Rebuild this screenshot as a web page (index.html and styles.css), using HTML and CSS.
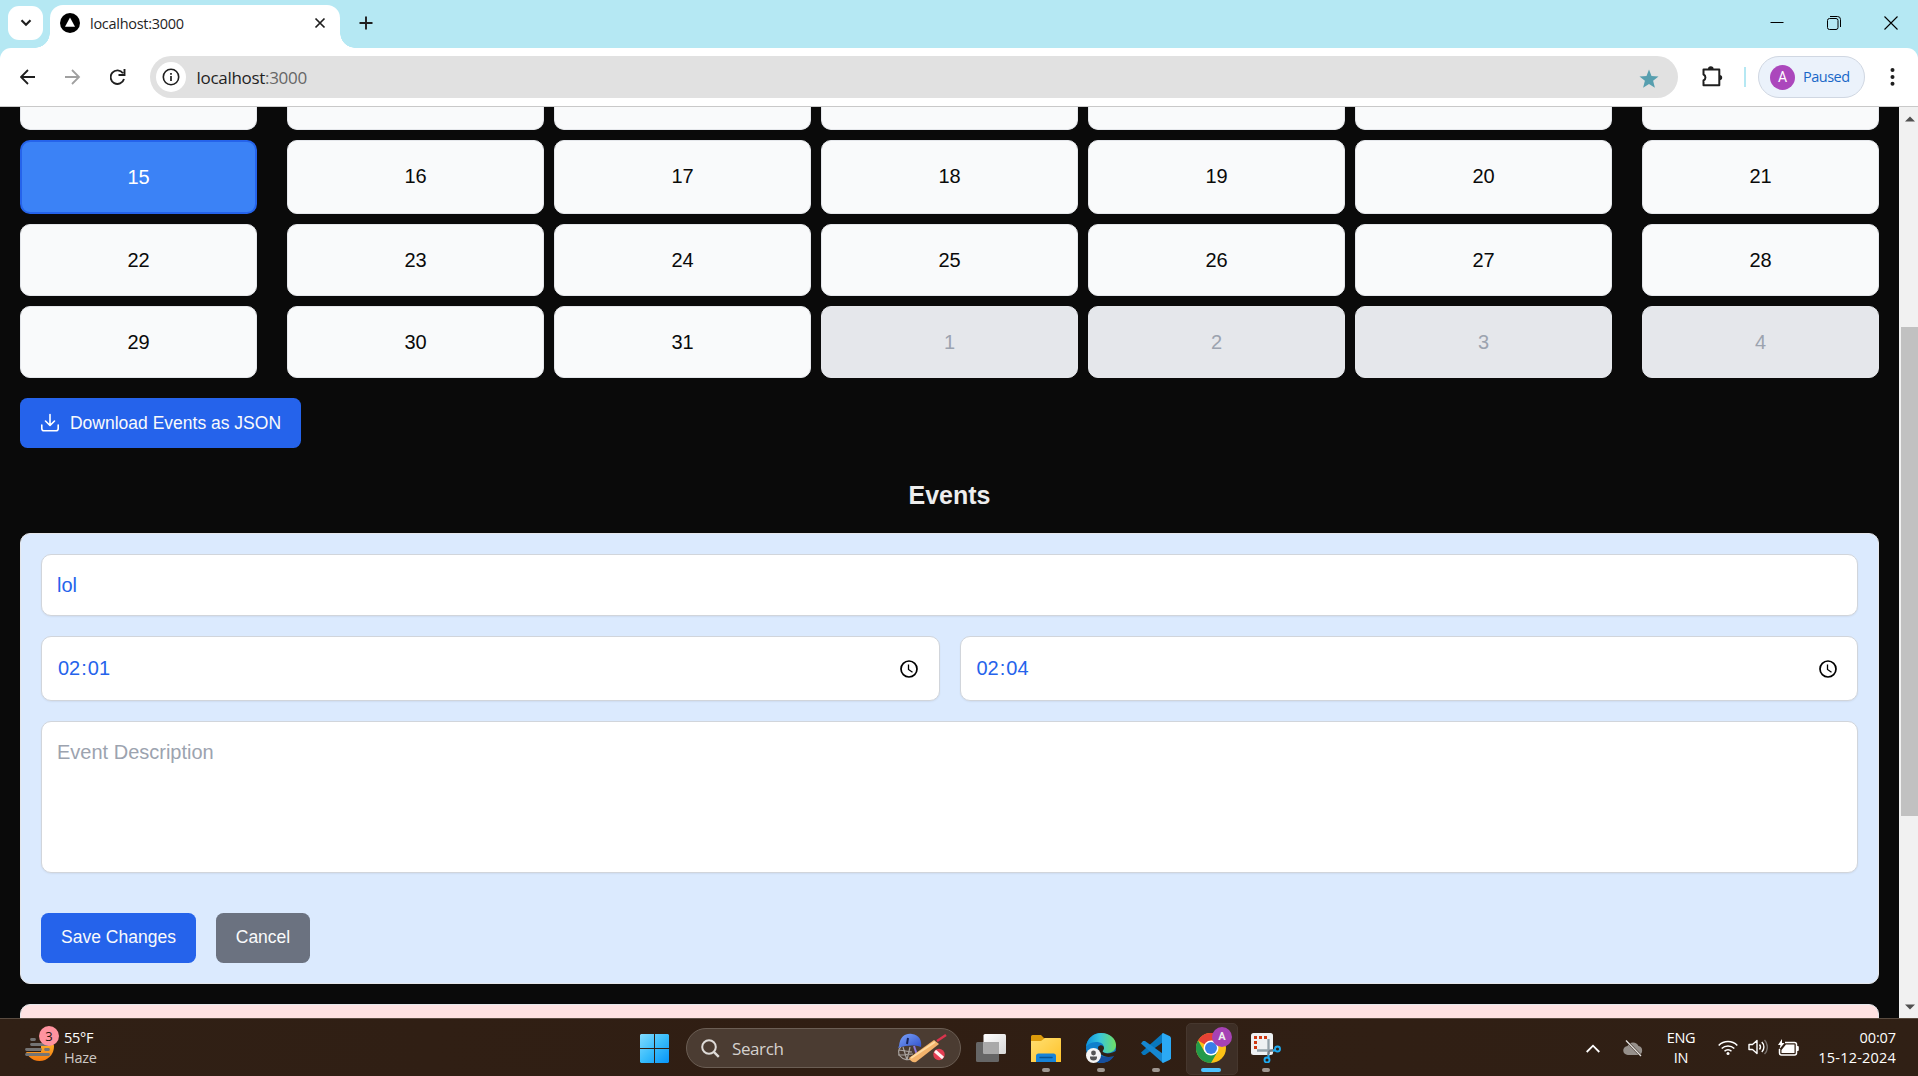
FILE: index.html
```html
<!DOCTYPE html>
<html lang="en">
<head>
<meta charset="utf-8">
<title>localhost:3000</title>
<link rel="stylesheet" href="styles.css">
</head>
<body>
<div class="screen">
  <header class="tabstrip">
    <button class="tab-search" aria-label="Search tabs"><svg width="12" height="8" viewBox="0 0 12 8"><path d="M1.500 1.300 6 5.800l4.500-4.500" fill="none" stroke="#1f1f1f" stroke-width="2.200"/></svg></button>
    <div class="tab">
      <svg class="favicon" width="20" height="20" viewBox="0 0 20 20"><circle cx="10" cy="10" r="10"/><path d="M10 4.600 15 13.700H5z" fill="#fff"/></svg>
      <span class="tab-title">localhost:3000</span>
      <svg class="tab-close" width="12" height="12" viewBox="0 0 12 12"><path d="M1.500 1.500l9 9M10.500 1.500l-9 9" stroke="#1f1f1f" stroke-width="1.700"/></svg>
    </div>
    <svg class="new-tab" width="14" height="14" viewBox="0 0 14 14"><path d="M7 .5v13M.5 7h13" stroke="#1f1f1f" stroke-width="1.900"/></svg>
    <div class="window-controls">
      <svg width="14" height="14" viewBox="0 0 14 14"><path d="M.5 6.500h13" stroke="#000" stroke-width="1"/></svg>
      <svg width="14" height="14" viewBox="0 0 14 14" fill="none" stroke="#000"><rect x=".5" y="2.500" width="10.500" height="11" rx="2"/><path d="M3 .5h7.500a3 3 0 0 1 3 3V11"/></svg>
      <svg width="14" height="14" viewBox="0 0 14 14"><path d="M.5.5l13 13M13.500.5l-13 13" stroke="#000" stroke-width="1.100"/></svg>
    </div>
  </header>

  <nav class="toolbar">
    <svg class="nav-icon" width="16" height="16" viewBox="0 0 16 16" fill="none" stroke="#1f1f1f" stroke-width="1.800"><path d="M15 8H1.500M8 1 1 8l7 7"/></svg>
    <svg class="nav-icon" width="16" height="16" viewBox="0 0 16 16" fill="none" stroke="#a0a0a0" stroke-width="1.800"><path d="M0 8h13.500M7 1l7 7-7 7"/></svg>
    <svg class="nav-icon" width="16" height="16" viewBox="0 0 16 16" fill="none" stroke="#1f1f1f" stroke-width="1.900"><path d="M13 4.200A6.800 6.800 0 1 0 14 10M14.500 0v6h-6"/></svg>
    <div class="address">
      <span class="site-info"><svg width="18" height="18" viewBox="0 0 18 18"><circle cx="9" cy="9" r="7.700" fill="none" stroke="#1f1f1f" stroke-width="1.600"/><path d="M9 8v5M9 5v1.700" stroke="#1f1f1f" stroke-width="1.700"/></svg></span>
      <span class="url">localhost<span class="port">:3000</span></span>
      <svg class="star" width="20" height="20" viewBox="0 0 20 20"><path d="M10 .5l2.500 6.500 7 .4-5.400 4.400 1.800 6.900L10 14.900l-5.900 3.800 1.800-6.900L.5 7.400l7-.4z" fill="#579faf"/></svg>
    </div>
    <svg class="extensions" width="22" height="22" viewBox="0 0 22 22"><path d="M2.500 3.500h15.800v15.800H2.500v-4.800a3.300 3.300 0 0 0 0-6z" fill="none" stroke="#1f1f1f" stroke-width="2" stroke-linejoin="round"/><path d="M7 3a2.800 2.800 0 0 1 5.600 0zM18.500 8.900a2.700 2.700 0 0 1 0 5.400z" fill="#1f1f1f"/></svg>
    <span class="divider"></span>
    <div class="profile"><span class="avatar">A</span><span class="paused">Paused</span></div>
    <svg class="menu-dots" width="5" height="18" viewBox="0 0 5 18" fill="#1f1f1f"><circle cx="2.500" cy="2" r="2"/><circle cx="2.500" cy="9" r="2"/><circle cx="2.500" cy="15.800" r="2"/></svg>
  </nav>

  <div class="viewport">
    <main class="page">
      <div class="calendar">
        <div class="day clipped first"></div><div class="day clipped"></div><div class="day clipped"></div><div class="day clipped"></div><div class="day clipped"></div><div class="day clipped"></div><div class="day clipped last"></div>
        <div class="day first selected">15</div><div class="day current-week">16</div><div class="day current-week">17</div><div class="day current-week">18</div><div class="day current-week">19</div><div class="day current-week">20</div><div class="day current-week last">21</div>
        <div class="day first">22</div><div class="day">23</div><div class="day">24</div><div class="day">25</div><div class="day">26</div><div class="day">27</div><div class="day last">28</div>
        <div class="day first">29</div><div class="day">30</div><div class="day">31</div><div class="day other">1</div><div class="day other">2</div><div class="day other">3</div><div class="day other last">4</div>
      </div>
      <button class="btn download"><svg width="20" height="20" viewBox="0 0 20 20" fill="none" stroke="#fff" stroke-width="1.600" stroke-linecap="round" stroke-linejoin="round"><path d="M1.800 12v3.500a2.300 2.300 0 0 0 2.300 2.300h11.800a2.300 2.300 0 0 0 2.300-2.300V12M5.500 8l4.500 4.500L14.500 8M10 12V1.500"/></svg><span>Download Events as JSON</span></button>
      <h2 class="heading">Events</h2>
      <section class="event-card">
        <div class="field title">lol</div>
        <div class="times">
          <div class="field time"><span class="clock-value"><span>02</span><span>:</span><span>01</span></span><svg width="18" height="18" viewBox="0 0 18 18" fill="none" stroke="#000"><circle cx="9" cy="9" r="8" stroke-width="1.700"/><path d="M8.500 4.500V9.500l4 2.700" stroke-width="1.300"/></svg></div>
          <div class="field time"><span class="clock-value"><span>02</span><span>:</span><span>04</span></span><svg width="18" height="18" viewBox="0 0 18 18" fill="none" stroke="#000"><circle cx="9" cy="9" r="8" stroke-width="1.700"/><path d="M8.500 4.500V9.500l4 2.700" stroke-width="1.300"/></svg></div>
        </div>
        <div class="field description">Event Description</div>
        <div class="actions"><button class="btn save">Save Changes</button><button class="btn cancel">Cancel</button></div>
      </section>
      <section class="next-card"></section>
    </main>
    <div class="scrollbar">
      <svg width="10" height="6" viewBox="0 0 10 6"><path d="M0 5.500 5 .5l5 5z" fill="#505050"/></svg>
      <div class="thumb"></div>
      <svg class="down" width="10" height="6" viewBox="0 0 10 6"><path d="M0 .5l5 5 5-5z" fill="#505050"/></svg>
    </div>
  </div>

  <footer class="taskbar">
    <div class="weather">
      <div class="weather-icon">
        <svg width="30" height="28" viewBox="0 0 30 28"><defs><linearGradient id="sun" x2="0" y2="1"><stop stop-color="#ffd13b"/><stop offset="1" stop-color="#f57a10"/></linearGradient></defs><circle cx="14.500" cy="12.500" r="14.500" fill="url(#sun)"/><path d="M0 0h30v11H0z" fill="#302015"/><path d="M0 10h16v8H0z" fill="#302015"/><g stroke="#747474" stroke-width="2.800" stroke-linecap="round"><path d="M6.500 5.500h3M6.500 10.500h18M1.500 15.500h14M20.500 15.500h3M1.500 20.500h22"/></g></svg>
        <span class="alert">3</span>
      </div>
      <div class="weather-text"><span>55°F</span><span class="haze">Haze</span></div>
    </div>
    <svg class="start" width="29" height="29" viewBox="0 0 29 29"><defs><linearGradient id="win" gradientUnits="userSpaceOnUse" x1="0" y1="0" x2="29" y2="29"><stop stop-color="#82dbff"/><stop offset=".5" stop-color="#39bdfb"/><stop offset="1" stop-color="#0794f8"/></linearGradient></defs><path d="M1 0h13v14H0V1zM15 0h13l1 1v13H15zM0 15h14v14H1l-1-1zM15 15h14v13l-1 1H15z" fill="url(#win)"/></svg>
    <div class="search">
      <svg width="19" height="19" viewBox="0 0 19 19" fill="none" stroke="#dedbd8"><circle cx="8" cy="8" r="6.800" stroke-width="2"/><path d="M12.800 12.800l5 5" stroke-width="2.400"/></svg>
      <span class="search-text">Search</span>
      <svg class="cricket" width="50" height="30" viewBox="0 0 50 30"><defs><linearGradient id="helmet" x2="1" y2="1"><stop stop-color="#7ba3fa"/><stop offset="1" stop-color="#3050ca"/></linearGradient></defs><path d="M4 14c-3 2-3 6-1 9 3 4 9 5 13 2M2 17l13 2M1 22l15-1M6 14l4 13M13 14l-3 13" fill="none" stroke="#aaa4a0" stroke-width="1.200"/><path d="M2 13C3 3 9 0 15 1c7 1 10 6 9 13-7-2-13-2-23 1z" fill="url(#helmet)"/><path d="M11 5l-1 6" stroke="#152257" stroke-width="2"/><path d="M17 13l3 9" stroke="#8e78da" stroke-width="2"/><path d="M12 25 37 7l5 4-23 18c-3 1-6-1-7-4z" fill="#f3b36c"/><path d="M14 25 38 9" stroke="#ffdaa0" stroke-width="2"/><path d="M40 8l9-6" stroke="#d9344d" stroke-width="2.500"/><circle cx="42" cy="21.500" r="5.700" fill="#e53c52"/><path d="M38 18l8 7" stroke="#fff1f2" stroke-width="3"/></svg>
    </div>
    <div class="apps">
      <div class="app idle"><svg viewBox="0 0 30 30"><defs><linearGradient id="pane" x2="1" y2="1"><stop stop-color="#fff"/><stop offset="1" stop-color="#d7d7d7"/></linearGradient></defs><rect x="0" y="9" width="23" height="20" rx="1.500" fill="#666"/><rect x="7.500" y="1" width="22.500" height="20" rx="1.500" fill="url(#pane)"/><path d="M7.500 9H23v12H7.500z" fill="#a9a9a9"/></svg></div>
      <div class="app"><svg viewBox="0 0 30 30"><defs><linearGradient id="folder" x2="1" y2="1"><stop stop-color="#ffdf71"/><stop offset="1" stop-color="#ffc229"/></linearGradient></defs><path d="M0 3.500A1.500 1.500 0 0 1 1.500 2H10l3 3h15a2 2 0 0 1 2 2v5H0z" fill="#dc9b0b"/><path d="M0 8h10l4-3h15a1 1 0 0 1 1 1v23H0z" fill="url(#folder)"/><path d="M5 29v-6a2.500 2.500 0 0 1 2.500-2.500h15A2.500 2.500 0 0 1 25 23v6z" fill="#1683d8"/><path d="M9 24.500h12" stroke="#075391" stroke-width="1.500" stroke-linecap="round"/></svg><i></i></div>
      <div class="app"><svg viewBox="0 0 30 30"><defs><linearGradient id="edge-top" x2="1"><stop stop-color="#0d91dc"/><stop offset=".45" stop-color="#37c5dd"/><stop offset="1" stop-color="#70df63"/></linearGradient></defs><circle cx="15" cy="15" r="15" fill="#0f80cc"/><path d="M0 14C1 5 8 0 15 0c9 0 15 6 15 12 0 5-4 8-9 8-3 0-5-1-5-2l2-3c0-4-3-6-8-6-5 0-9 3-10 5z" fill="url(#edge-top)"/><path d="M11 15c-1 6 5 11 17 8-3 5-8 7-13 7-5 0-9-9-4-15z" fill="#164f9e"/><path d="M12 14c2-3 6-2 6 1 0 2-2 3-1 4 2 2 8 2 13-1v4c-7 4-18 2-18-8z" fill="#302015"/><circle cx="7.500" cy="22.500" r="7.500" fill="#f5f5f5"/><circle cx="7.500" cy="20" r="2.400" fill="#555"/><path d="M4 23.500h7v1a3.500 3 0 0 1-7 0z" fill="#555"/></svg><i></i></div>
      <div class="app"><svg viewBox="0 0 30 30"><path d="M22 0 0 19.500l2 2.500 2 0L25 7z" fill="#0877bd"/><path d="M22 30 0 10.500 2 8h2l21 15z" fill="#1687d1"/><path d="M22 0l7 3.200 1 1.500v20.600l-1 1.500L22 30l-1-1V1z" fill="#2ba9f4"/></svg><i></i></div>
      <div class="app active"><svg viewBox="0 0 30 30"><circle cx="15" cy="15" r="15" fill="#fbc116"/><path d="M15 15 2 7.500A15 15 0 0 1 28 7.500H15z" fill="#e74235"/><path d="M2 7.500A15 15 0 0 0 15 30l6.500-11.200L15 15l-6.500 3.700z" fill="#229a4a"/><circle cx="15" cy="15" r="7.500" fill="#fff"/><circle cx="15" cy="15" r="6" fill="#397fe9"/></svg><span class="mini-avatar">A</span><i></i></div>
      <div class="app"><svg viewBox="0 0 30 30"><rect width="22" height="22" rx="2.500" fill="#eef1f3"/><path d="M4.500 16V4.500H17" fill="none" stroke="#cf3913" stroke-width="3" stroke-dasharray="3 2"/><path d="M17.500 6v15M6 17.500h16" stroke="#94a2aa" stroke-width="2.300"/><path d="M18 18l5-1M18 18l-1 5" stroke="#737f88" stroke-width="2"/><g fill="none" stroke="#1daaf0" stroke-width="1.900"><circle cx="26.500" cy="16" r="2.500"/><circle cx="16" cy="27" r="2.500"/><path d="M22 18l2.500-1M18 22l-1 3"/></g></svg><i></i></div>
    </div>
    <div class="tray">
      <svg class="chevron" width="14" height="9" viewBox="0 0 14 9"><path d="M.7 8 7 1.700 13.300 8" fill="none" stroke="#fff" stroke-width="1.800"/></svg>
      <svg class="cloud" width="20" height="17" viewBox="0 0 20 17"><path d="M5 15a4.500 4.500 0 0 1-.5-9A6 6 0 0 1 15.500 6a4.600 4.600 0 0 1 0 9z" fill="#96908b"/><path d="M3 .5l15 15.500" stroke="#302015" stroke-width="2.400"/><path d="M3 .5l15 15.500" stroke="#e5e3e1" stroke-width="1.300"/></svg>
      <div class="language"><span>ENG</span><span>IN</span></div>
      <svg class="wifi" width="20" height="16" viewBox="0 0 20 16" fill="none" stroke="#fff" stroke-width="1.500"><path d="M.7 5.500a13 13 0 0 1 18.600 0M3.700 8.500a9 9 0 0 1 12.600 0M6.500 11.300a5 5 0 0 1 7 0"/><circle cx="10" cy="13.500" r="1.500" fill="#fff" stroke="none"/></svg>
      <svg class="speaker" width="20" height="16" viewBox="0 0 20 16" fill="none" stroke="#fff" stroke-width="1.400"><path d="M1 5.500h3.500L9 1.500v13l-4.500-4H1z" stroke-linejoin="round"/><path d="M11.500 5.500a4 4 0 0 1 0 5M13.800 3a7 7 0 0 1 0 10"/><path d="M16.500 1a10 10 0 0 1 0 14" stroke="#77706b"/></svg>
      <svg class="battery" width="21" height="17" viewBox="0 0 21 17"><path d="M7 3.500h9.500a2 2 0 0 1 2 2V14a2 2 0 0 1-2 2H3.500a2 2 0 0 1-2-2v-4" fill="none" stroke="#fff" stroke-width="1.500"/><path d="M8 5.500h8.500V14h-13v-3zM19 7h.8a1 1 0 0 1 1 1v3a1 1 0 0 1-1 1H19zM4 0 0 6h2.500L1.500 10 6.500 4H4z" fill="#fff"/></svg>
      <div class="clock"><span class="hour">00:07</span><span>15-12-2024</span></div>
    </div>
  </footer>
</div>
</body>
</html>
```
FILE: styles.css
```css
* { box-sizing: border-box; }
body { margin: 0; overflow: hidden; font-family: "Open Sans", "Noto Sans", sans-serif; color: #1f1f1f; }
svg { display: block; flex: none; }
button { border: 0; padding: 0; font: inherit; }
.screen { width: 1918px; height: 1076px; display: flex; flex-direction: column; background: #b5e8f3; }

/* Browser tab strip */
.tabstrip { height: 48px; display: flex; padding-left: 8px; background: #b5e8f3; flex: none; }
.tab-search { width: 35px; height: 34px; margin-top: 6px; border-radius: 11px; background: #fff; display: flex; align-items: center; justify-content: center; }
.tab { position: relative; width: 290px; height: 43px; margin: 5px 0 0 7px; padding: 0 14px 7px 10px; display: flex; align-items: center; background: #fff; border-radius: 13px 13px 0 0; }
.tab::before, .tab::after { content: ""; position: absolute; bottom: 0; width: 15px; height: 15px; }
.tab::before { left: -15px; background: radial-gradient(circle at 0 0, transparent 14.500px, #fff 15px); }
.tab::after { right: -15px; background: radial-gradient(circle at 100% 0, transparent 14.500px, #fff 15px); }
.tab-title { margin-left: 10px; font-size: 14.500px; letter-spacing: -.28px; white-space: nowrap; }
.tab-close { margin-left: auto; }
.new-tab { margin: 16px 0 0 19px; }
.window-controls { display: flex; gap: 43px; margin: 16px 20px 0 auto; }

/* Browser toolbar */
.toolbar { height: 59px; padding-left: 20px; display: flex; align-items: center; flex: none; background: #fff; border-bottom: 1px solid #c9c9c9; border-radius: 11px 11px 0 0; }
.toolbar > * { flex: none; }
.nav-icon { margin-right: 29px; }
.nav-icon:nth-child(3) { margin-right: 24px; }
.address { width: 1528px; height: 42px; display: flex; align-items: center; padding: 0 19px 0 6px; border-radius: 21px; background: #e1e1e1; }
.site-info { width: 30px; height: 30px; border-radius: 50%; background: #fff; display: flex; align-items: center; justify-content: center; }
.url { margin-left: 10.500px; font-size: 17px; letter-spacing: -.3px; }
.port { color: #666; }
.star { margin: 3px 0 0 auto; }
.extensions { margin-left: 23px; }
.divider { width: 2px; height: 20px; margin-left: 21px; background: #b5e8f3; }
.profile { width: 107px; height: 42px; margin-left: 12px; padding-left: 11px; display: flex; align-items: center; border: 1px solid #d0d7e2; border-radius: 21px; background: #ebf2fb; }
.avatar { width: 25px; height: 25px; border-radius: 50%; background: #ab47bc; color: #fff; font: 14px/25px Roboto, sans-serif; text-align: center; }
.paused { margin-left: 8px; padding-bottom: 1px; color: #1967c8; font-size: 14.500px; letter-spacing: -.5px; }
.menu-dots { margin-left: 25px; }

/* Calendar page */
.viewport { height: 911px; display: flex; flex: none; overflow: hidden; background: #0a0a0a; }
.page { width: 1899px; padding: 0 20px; font-family: "Liberation Sans", Arial, sans-serif; }
.calendar { display: grid; grid-template-columns: repeat(7, 1fr); grid-template-rows: 23px 74px 72px 72px; gap: 10px; }
.day { display: flex; align-items: center; justify-content: center; border: 1px solid #e5e7eb; border-radius: 10px; background: #f9fafb; color: #0a0a0a; font-size: 20px; }
.clipped { border-top: 0; border-radius: 0 0 10px 10px; }
.current-week { padding-bottom: 2px; }
.first { margin-right: 20px; }
.last { margin-left: 20px; }
.selected { border: 2px solid #2563eb; background: #3b82f6; color: #fff; }
.other { background: #e5e7eb; color: #9ca3af; }
.btn { height: 50px; display: flex; align-items: center; justify-content: center; border-radius: 7.500px; background: #2563eb; color: #f9fafb; font-size: 17.500px; white-space: nowrap; }
.download { width: 281px; margin-top: 20px; gap: 10px; }
.heading { margin: 32px 0 0; height: 53px; font-size: 25px; line-height: 31px; color: #ededed; text-align: center; }
.event-card { height: 451px; padding: 20px; border: 1px solid #e5e7eb; border-radius: 10px; background: #dbeafe; }
.field { display: flex; border: 1px solid #d1d5db; border-radius: 10px; padding: 0 15px; background: #fff; box-shadow: 0 1px 2px rgba(0, 0, 0, .06); color: #2563eb; font-size: 20px; align-items: center; }
.title { height: 62px; }
.times { display: grid; grid-template-columns: 1fr 1fr; gap: 20px; margin: 20px 0; }
.time { height: 65px; justify-content: space-between; padding: 0 20.500px 0 16px; }
.clock-value { display: flex; gap: 1px; }
.description { height: 152px; align-items: flex-start; padding-top: 19px; color: #9ca3af; }
.actions { display: flex; gap: 20px; margin-top: 40px; }
.save { width: 155px; padding-bottom: 2px; }
.cancel { width: 94px; padding-bottom: 2px; background: #6b7280; }
.next-card { height: 40px; margin-top: 20px; border: 1px solid #e5e7eb; border-radius: 10px 10px 0 0; background: #fee2e2; }
.scrollbar { width: 19px; display: flex; flex-direction: column; align-items: center; padding: 9px 0 8px 2px; background: #f1f1f1; }
.thumb { width: 17px; height: 489px; margin-top: 205px; background: #c1c1c1; }
.down { margin-top: auto; }

/* Windows taskbar */
.taskbar { height: 58px; display: flex; border-top: 1px solid #594b40; background: linear-gradient(90deg, #302015, #301e13 45%, #302015); color: #fff; flex: none; font-size: 14.500px; line-height: 20px; }
.weather { width: 640px; display: flex; padding-left: 25px; }
.weather-icon { position: relative; width: 34px; padding-top: 15px; }
.alert { position: absolute; left: 14px; top: 7px; width: 20px; height: 20px; border-radius: 50%; background: #ff939f; color: #24150f; font-size: 13px; text-align: center; }
.weather-text { display: flex; flex-direction: column; margin: 9px 0 0 5px; letter-spacing: -.3px; }
.haze { color: #cdc8c4; }
.start { margin-top: 15px; }
.search { width: 275px; height: 40px; margin: 9px 15px 0 17px; padding: 0 13px 0 14px; display: flex; align-items: center; border: 1px solid #6b5e54; border-radius: 20px; background: #4b3c32; }
.search-text { margin-left: 12px; padding-top: 1px; font-size: 17px; letter-spacing: -.4px; color: #d5d1ce; }
.cricket { margin-left: auto; }
.apps { display: flex; gap: 25px; }
.app { position: relative; width: 30px; padding-top: 14px; }
.app svg { position: relative; width: 30px; height: 30px; }
.app i { position: absolute; left: 11px; bottom: 4px; width: 8px; height: 4px; border-radius: 2px; background: #9e9690; }
.active::before { content: ""; position: absolute; left: -10px; top: 4px; width: 50px; height: 50px; border: 1px solid #46372e; border-radius: 5px; background: #3d2e25; }
.active i { left: 5px; width: 20px; background: #4cc2ff; }
.mini-avatar { position: absolute; left: 16px; top: 8px; width: 20px; height: 20px; border-radius: 50%; background: #a642b5; color: #eee; font: bold 11px/20px Roboto, sans-serif; text-align: center; }
.tray { display: flex; align-items: flex-start; margin-left: auto; padding-right: 22px; }
.chevron { margin-top: 25px; }
.cloud { margin: 21px 0 0 23px; }
.language { width: 40px; margin: 9px 0 0 18px; display: flex; flex-direction: column; align-items: center; letter-spacing: -.3px; }
.wifi { margin: 21px 0 0 17px; }
.speaker { margin: 20px 0 0 10px; }
.battery { margin: 20px 0 0 10px; }
.clock { width: 97px; margin-top: 9px; display: flex; flex-direction: column; align-items: flex-end; letter-spacing: .2px; white-space: nowrap; }
.hour { letter-spacing: -.1px; }
```
